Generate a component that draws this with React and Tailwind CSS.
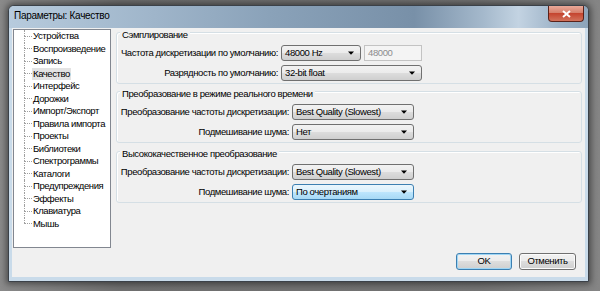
import React from 'react';

const treeItems = [
  'Устройства', 'Воспроизведение', 'Запись', 'Качество', 'Интерфейс', 'Дорожки',
  'Импорт/Экспорт', 'Правила импорта', 'Проекты', 'Библиотеки', 'Спектрограммы',
  'Каталоги', 'Предупреждения', 'Эффекты', 'Клавиатура', 'Мышь',
];

function Arrow() {
  return (
    <svg width="6" height="4" viewBox="0 0 6 4" className="shrink-0">
      <path d="M0 0.5h6L3 3.8z" fill="#000" />
    </svg>
  );
}

function Combo({ value, w, focused }) {
  return (
    <div
      className={`flex h-[16px] ${w} items-center justify-between rounded-[3px] border pl-[3px] pr-[6px] ${
        focused
          ? 'border-[#3c7fb1] bg-[linear-gradient(#eaf6fd,#d9f0fc_50%,#bee6fd_50%,#a7d9f5)]'
          : 'border-[#707070] bg-[linear-gradient(#f2f2f2,#ebebeb_50%,#dddddd_50%,#cfcfcf)]'
      }`}
    >
      <span className="leading-none">{value}</span>
      <Arrow />
    </div>
  );
}

function Label({ children }) {
  return <div className="flex h-[16px] items-center justify-end pr-[3px]">{children}</div>;
}

function Group({ title, cols, children }) {
  return (
    <div className="rounded-[3px] border border-[#d5dfe5] pb-[2px] shadow-[inset_1px_1px_0_#fff]">
      <div className="-mt-[5px] ml-[3px] w-fit bg-[#f0f0f0] px-[2px] leading-[13px]">{title}</div>
      <div className={`mt-[4px] grid ${cols} gap-y-[4px]`}>{children}</div>
    </div>
  );
}

function TreeRow({ label, last, selected }) {
  return (
    <div className="flex h-[12.5px] items-stretch">
      <div className="flex w-[8px] shrink-0 flex-col">
        <div className="flex-1 border-l border-dotted border-[#a0a0a0]" />
        <div
          className={`flex-1 border-t border-dotted border-[#a0a0a0] ${last ? '' : 'border-l'}`}
        />
      </div>
      <div className={`flex items-center px-[1px] ${selected ? 'bg-[#e3e3e3]' : ''}`}>{label}</div>
    </div>
  );
}

function Button({ children, w, focused }) {
  return (
    <div
      className={`flex h-[17px] ${w} items-center justify-center rounded-[3px] border ${
        focused
          ? 'border-[#3c7fb1] shadow-[inset_0_0_0_1px_#9fd6f5]'
          : 'border-[#707070] shadow-[inset_0_0_0_1px_#fbfbfb]'
      } bg-[linear-gradient(#f2f2f2,#ebebeb_50%,#dddddd_50%,#cfcfcf)]`}
    >
      {children}
    </div>
  );
}

export default function App() {
  return (
    <div className="h-[291px] w-[600px] overflow-hidden whitespace-nowrap bg-[linear-gradient(90deg,#8a8a8a,#6f6f6f_20%,#737373_80%,#858585)] pl-[8px] pt-[5px] font-['Liberation_Sans',Arial,sans-serif] text-[9.5px] tracking-[-0.4px] text-black">
      <div className="flex h-[277px] w-[581px] flex-col overflow-hidden rounded-t-[6px] border border-[#3b4148] bg-[#c9dbea] shadow-[0_0_6px_2px_rgba(0,0,0,0.45)]">
        {/* Title bar */}
        <div className="flex h-[22px] shrink-0 items-start bg-[linear-gradient(90deg,#b7cbdd,#9fb5ca_25%,#8aa2b9_45%,#7890a8_70%,#a5b9cc_82%,#c3d3e2_88%,#9bb1c6_95%,#8da4ba)]">
          <span className="pl-[5px] pt-[4px] text-[10px] leading-[12px] tracking-[-0.3px]">Параметры: Качество</span>
          <div className="ml-auto mr-[4px] flex h-[16px] w-[36px] items-center justify-center rounded-b-[4px] border border-t-0 border-[#5a2119] bg-[linear-gradient(#e9a999,#d6806c_45%,#c5452f_50%,#d2735c)]">
            <svg width="9" height="8" viewBox="0 0 9 8">
              <path d="M1 1l7 6M8 1L1 7" stroke="#fff" strokeWidth="2" />
            </svg>
          </div>
        </div>

        {/* Client */}
        <div className="mx-[3px] mb-[4px] flex flex-1 flex-col bg-[#f0f0f0]">
          <div className="flex h-[220px] items-start">
            <div className="ml-[1px] mt-[1px] h-[219px] w-[98px] shrink-0 overflow-hidden border border-[#828790] bg-white pl-[10px]">
              {treeItems.map((t, i) => (
                <TreeRow key={t} label={t} last={i === treeItems.length - 1} selected={t === 'Качество'} />
              ))}
            </div>

            <div className="ml-[5px] mr-[3px] flex min-w-0 flex-1 flex-col gap-[7px] pt-[4px]">
              <Group title="Сэмплирование" cols="grid-cols-[164px_auto]">
                <Label>Частота дискретизации по умолчанию:</Label>
                <div className="flex gap-[3px]">
                  <Combo value="48000 Hz" w="w-[80px]" />
                  <div className="flex h-[16px] w-[58px] items-center border border-[#c3c3c3] bg-[#f4f4f4] pl-[3px] text-[#8d8d8d]">
                    48000
                  </div>
                </div>
                <Label>Разрядность по умолчанию:</Label>
                <Combo value="32-bit float" w="w-[141px]" />
              </Group>

              <Group title="Преобразование в режиме реального времени" cols="grid-cols-[175px_auto]">
                <Label>Преобразование частоты дискретизации:</Label>
                <Combo value="Best Quality (Slowest)" w="w-[122px]" />
                <Label>Подмешивание шума:</Label>
                <Combo value="Нет" w="w-[122px]" />
              </Group>

              <div className="mt-[1px]">
                <Group title="Высококачественное преобразование" cols="grid-cols-[175px_auto]">
                  <Label>Преобразование частоты дискретизации:</Label>
                  <Combo value="Best Quality (Slowest)" w="w-[122px]" />
                  <Label>Подмешивание шума:</Label>
                  <Combo value="По очертаниям" w="w-[122px]" focused />
                </Group>
              </div>
            </div>
          </div>

          <div className="flex flex-1 items-start justify-end gap-[7px] pr-[9px] pt-[5px]">
            <Button w="w-[56px]" focused>OK</Button>
            <Button w="w-[57px]">Отменить</Button>
          </div>
        </div>
      </div>
    </div>
  );
}
